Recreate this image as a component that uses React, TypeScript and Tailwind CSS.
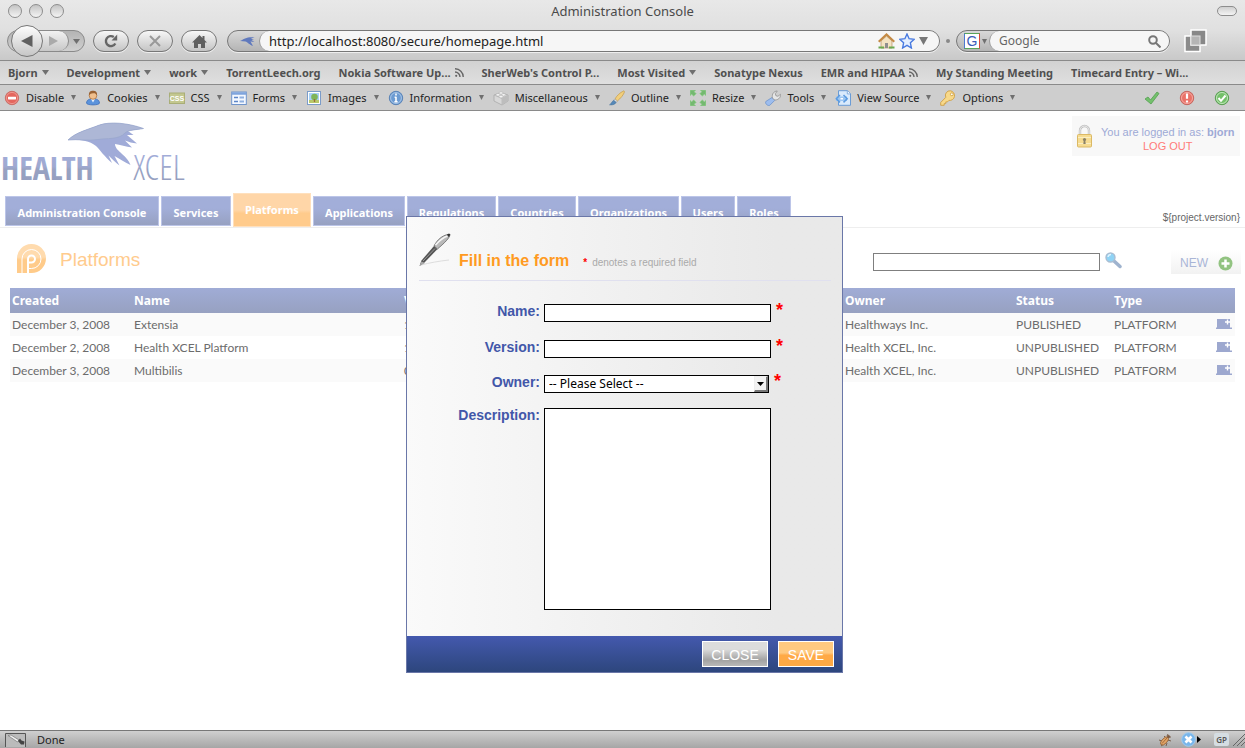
import React from "react";

const ui = "font-['Noto_Sans','DejaVu_Sans',sans-serif]";
const humanist = "font-['Lato','Noto_Sans',sans-serif]";
const arial = "font-['Liberation_Sans',Arial,sans-serif]";

function Caret({ small = false }: { small?: boolean }) {
  return (
    <svg className={small ? "h-[5px] w-[5px] shrink-0" : "h-[5px] w-[7px] shrink-0"} viewBox="0 0 7 5" preserveAspectRatio="none" fill="#6f6f6f">
      <path d="M0 0h7L3.5 5z" />
    </svg>
  );
}

function Rss() {
  return (
    <svg className="size-[9px] shrink-0" viewBox="0 0 9 9" fill="none" stroke="#666" strokeWidth="1.4">
      <path d="M0 .8A8 8 0 0 1 8.2 9M0 4A5 5 0 0 1 5 9" />
      <circle cx="1.2" cy="7.8" r="1.1" fill="#666" stroke="none" />
    </svg>
  );
}

function Icon({ name }: { name: string }) {
  const body: Record<string, React.ReactNode> = {
    disable: (
      <>
        <circle cx="8" cy="8" r="6.7" fill="#e4665e" stroke="#c9706a" />
        <circle cx="8" cy="8" r="5.6" fill="none" stroke="#f0a29b" strokeWidth=".8" />
        <rect x="4" y="6.7" width="8" height="2.8" rx=".4" fill="#fff" />
      </>
    ),
    cookies: (
      <>
        <path d="M1.5 13C2 9.500 4 9 8 9s6 .5 6.500 4c0 2.500-13 2.500-13 0z" fill="#5b93dc" stroke="#3c6fba" strokeWidth=".8" />
        <path d="M6 9l2 3.500L10 9z" fill="#e8f0fb" />
        <circle cx="8" cy="5.500" r="3.800" fill="#f0bf8d" stroke="#a9672c" strokeWidth=".7" />
        <path d="M4 5.500C3.500 2 5.500.8 8 .8S12.500 2 12 5.500c-1-2-2-2.500-4-2.300C6 3.200 5 4 4 5.500z" fill="#9a6233" />
      </>
    ),
    css: (
      <>
        <rect x=".5" y="3" width="15" height="10.500" fill="#c3c78f" stroke="#a9ae77" />
        <text x="8" y="10.800" textAnchor="middle" fontSize="7" fontWeight="700" fill="#fff" fontFamily="Liberation Sans, sans-serif">CSS</text>
      </>
    ),
    forms: (
      <>
        <rect x=".7" y="2" width="14.600" height="12.500" fill="#f4f8ff" stroke="#6f94cb" />
        <path d="M1 3.500h14" stroke="#7fa4dc" strokeWidth="2.500" />
        <path d="M3 7.500h4M3 11.500h4" stroke="#5d86c8" strokeWidth="1.500" />
        <path d="M8.500 7.500H13M8.500 11.500H13" stroke="#8fb0df" strokeWidth="2" />
      </>
    ),
    images: (
      <>
        <rect x="1.500" y="1.500" width="13" height="13" fill="#fff" stroke="#7b9cc9" />
        <path d="M3 3h10v10H3z" fill="#a8d1f5" />
        <path d="M3 10h10v3H3z" fill="#b9c86a" />
        <circle cx="8.500" cy="7" r="3.300" fill="#7fb558" />
        <path d="M8.500 9v3" stroke="#9a6a3b" strokeWidth="1.300" />
      </>
    ),
    information: (
      <>
        <circle cx="8" cy="8" r="6.700" fill="#6c9bd2" stroke="#5a83b6" />
        <circle cx="8" cy="8" r="5.400" fill="none" stroke="#b9d1ec" strokeWidth=".8" />
        <path d="M8 3.600v1.900M8 6.800V12M6.600 7.200H8M6.400 11.700h3.200" stroke="#fff" strokeWidth="1.600" />
      </>
    ),
    misc: (
      <>
        <path d="M8 2.500l7 2.500v6l-6 4L1 11V5z" fill="#d8d8d8" stroke="#aaa" strokeWidth=".8" />
        <path d="M1 5l8 3.500L15 5M9 8.500V15" fill="none" stroke="#b5b5b5" strokeWidth=".8" />
        <path d="M9 8.500V15l6-4V5z" fill="#bdbdbd" />
        <ellipse cx="5" cy="4.800" rx="2" ry="1.300" fill="#f3f3f3" stroke="#aaa" strokeWidth=".5" />
        <ellipse cx="10.500" cy="4.800" rx="2" ry="1.300" fill="#f3f3f3" stroke="#aaa" strokeWidth=".5" />
        <ellipse cx="8" cy="3" rx="2" ry="1.200" fill="#f3f3f3" stroke="#aaa" strokeWidth=".5" />
        <ellipse cx="8" cy="6.600" rx="2" ry="1.300" fill="#f3f3f3" stroke="#aaa" strokeWidth=".5" />
      </>
    ),
    outline: (
      <>
        <path d="M15 .8C11 2.500 7.500 6 6 9l2.300 2C11.500 8.500 14.500 5 15.700 1.500z" fill="#f2cf7c" stroke="#c09a4c" strokeWidth=".7" />
        <path d="M6 9l2.300 2-1.200 1.500L4.700 10.500z" fill="#ddd" stroke="#999" strokeWidth=".5" />
        <path d="M4.700 10.300l2.500 2.200C5.500 15 3 15 .5 14.800c1.800-.8 2-3 4.200-4.500z" fill="#5688b8" stroke="#3d6c99" strokeWidth=".5" />
      </>
    ),
    resize: (
      <path
        d="M0 0h6L4.300 1.700l2 2-2.600 2.600-2-2L0 6zM16 0v6l-1.700-1.700-2 2-2.600-2.600 2-2L10 0zM0 16v-6l1.700 1.700 2-2 2.600 2.600-2 2L6 16zM16 16h-6l1.700-1.700-2-2 2.600-2.600 2 2L16 10z"
        fill="#74b970"
        stroke="#9ed39a"
        strokeWidth=".7"
      />
    ),
    tools: (
      <>
        <path d="M7 7.500l2.800 2.800-5 5c-2 1-5-1.600-4-3.800z" fill="#9dbdee" stroke="#6f94cc" strokeWidth=".8" />
        <path d="M7.500 8C6.500 4 9 1 12.300 1l-2 2.700.6 2 2 .6 2.600-2C16 8 12.500 10.500 9.300 9.800z" fill="#e6e6e6" stroke="#909090" strokeWidth=".8" />
      </>
    ),
    source: (
      <>
        <path d="M3.500.7h9l3 3v11.600h-12z" fill="#d9eafc" stroke="#6a9cd6" />
        <path d="M12.300.7v3.200h3" fill="#fff" stroke="#6a9cd6" strokeWidth=".8" />
        <rect x="1" y="6.500" width="11" height="4.500" fill="#9cc6f2" />
        <path d="M5 5L1.300 8.700 5 12.400M8.500 5l3.700 3.700-3.700 3.700" fill="none" stroke="#5c9be0" strokeWidth="1.500" />
        <path d="M5.500 8.700h2.500" stroke="#fff" strokeWidth="1.500" />
      </>
    ),
    options: (
      <>
        <path d="M10.500.8a4.600 4.600 0 0 0-4.700 6.500L.7 12.500v2.800h3.500v-1.700h1.600v-1.700h1.700l1.400-1.500a4.700 4.700 0 1 0 1.600-9.600z" fill="#f8d98a" stroke="#cf9f45" strokeWidth=".9" />
        <circle cx="11.800" cy="4.300" r="1.400" fill="#fff" stroke="#c58f25" strokeWidth=".7" />
      </>
    ),
  };
  return (
    <svg className="size-4 shrink-0" viewBox="0 0 16 16" aria-hidden="true">
      {body[name]}
    </svg>
  );
}

function BirdMark() {
  return (
    <svg className="h-[9px] w-[15px]" viewBox="0 0 15 9" fill="#6079bd">
      <path d="M0 4C4 2 7-.5 14.500 .3L11 1.700 14 3 11.500 3.300 14.500 5 10.500 4.600 13 9C9 7.500 7.500 5 5.500 4.500z" />
    </svg>
  );
}

const bookmarks: { label: string; mark?: "menu" | "feed" }[] = [
  { label: "Bjorn", mark: "menu" },
  { label: "Development", mark: "menu" },
  { label: "work", mark: "menu" },
  { label: "TorrentLeech.org" },
  { label: "Nokia Software Up...", mark: "feed" },
  { label: "SherWeb's Control P..." },
  { label: "Most Visited", mark: "menu" },
  { label: "Sonatype Nexus" },
  { label: "EMR and HIPAA", mark: "feed" },
  { label: "My Standing Meeting" },
  { label: "Timecard Entry – Wi..." },
];

const tools = [
  { icon: "disable", label: "Disable" },
  { icon: "cookies", label: "Cookies" },
  { icon: "css", label: "CSS" },
  { icon: "forms", label: "Forms" },
  { icon: "images", label: "Images" },
  { icon: "information", label: "Information" },
  { icon: "misc", label: "Miscellaneous" },
  { icon: "outline", label: "Outline" },
  { icon: "resize", label: "Resize" },
  { icon: "tools", label: "Tools" },
  { icon: "source", label: "View Source" },
  { icon: "options", label: "Options" },
];

const pill = "flex h-[22px] w-9 shrink-0 items-center justify-center rounded-full border border-[#777] bg-linear-to-b from-[#f7f7f7] to-[#c4c4c4] shadow-[0_1px_0_#eee]";

function BrowserChrome() {
  return (
    <header className={ui}>
      <div className="bg-linear-to-b from-[#e8e8e8] via-[#e0e0e0] to-[#c8c8c8]">
        <div className="flex h-[22px] items-center px-2">
          <div className="flex w-[60px] gap-[7px]">
            {[0, 1, 2].map((n) => (
              <button key={n} aria-label={["Close window", "Minimise", "Zoom"][n]} className="size-[14px] rounded-full border border-[#8d8d8d] bg-linear-to-b from-[#c4c4c4] to-[#f4f4f4]" />
            ))}
          </div>
          <h1 className="flex-1 text-center text-[13px] leading-[22px] text-[#4a4a4a]">Administration Console</h1>
          <div className="flex w-[60px] justify-end">
            <button aria-label="Toggle toolbar" className="h-[10px] w-5 rounded-full border border-[#8d8d8d] bg-linear-to-b from-[#d0d0d0] to-[#f4f4f4]" />
          </div>
        </div>
        <div className="flex h-[39px] items-center border-b border-[#8a8a8a] pr-[38px] pl-[7px]">
          <div className="mr-2 flex h-[22px] w-[78px] shrink-0 items-center rounded-full border border-[#8a8a8a] bg-linear-to-b from-[#b4b4b4] to-[#d0d0d0]">
            <button aria-label="Back" className="z-10 ml-[3px] flex size-8 shrink-0 items-center justify-center rounded-full border border-[#777] bg-linear-to-b from-[#fdfdfd] to-[#c6c6c6]">
              <svg className="h-[12px] w-[12px]" viewBox="0 0 12 12" fill="#606060"><path d="M11.500 0v12L0 6z" /></svg>
            </button>
            <button aria-label="Forward" className="-ml-1 flex h-5 w-[30px] shrink-0 items-center justify-center rounded-r-full border-r border-[#8a8a8a] bg-linear-to-b from-[#f2f2f2] to-[#c8c8c8]">
              <svg className="h-[10px] w-[9px]" viewBox="0 0 9 10" fill="#aaa"><path d="M0 0v10l9-5z" /></svg>
            </button>
            <button aria-label="History" className="flex flex-1 items-center justify-center"><Caret /></button>
          </div>
          <div className="mr-[10px] flex shrink-0 gap-2">
            <button aria-label="Reload" className={pill}>
              <svg className="size-[14px]" viewBox="0 0 14 14" fill="none" stroke="#666" strokeWidth="2.400">
                <path d="M11.300 9.500A5 5 0 1 1 9.800 3" /><path d="M13.200.5v6H7.500z" fill="#666" stroke="none" />
              </svg>
            </button>
            <button aria-label="Stop" className={pill}>
              <svg className="size-[12px]" viewBox="0 0 12 12" stroke="#999" strokeWidth="2"><path d="M1 1l10 10M11 1L1 11" /></svg>
            </button>
            <button aria-label="Home" className={pill}>
              <svg className="h-[13px] w-[15px]" viewBox="0 0 15 13" fill="#606060"><path d="M7.500 0l3 3V1h2v4L15 7.500h-2V13H9V9H6v4H2V7.500H0z" /></svg>
            </button>
          </div>
          <div className="flex h-[22px] flex-1 items-center overflow-hidden rounded-full border border-[#777] bg-linear-to-b from-[#d8d8d8] to-[#b4b4b4] shadow-[0_1px_0_#eee]">
            <div className="flex w-[31px] shrink-0 justify-center pl-2"><BirdMark /></div>
            <div className="flex h-full flex-1 items-center gap-1 rounded-l-full border-l border-[#999] bg-[#f6f6f6] pr-[11px] pl-[9px]">
              <input aria-label="Address" defaultValue="http://localhost:8080/secure/homepage.html" className="w-full min-w-0 bg-transparent text-[13px] leading-5 text-[#222] outline-none" />
              <svg className="h-4 w-[17px] shrink-0" viewBox="0 0 17 16">
                <path d="M3 8v7h11V8L8.500 3z" fill="#f3e3c4" stroke="#a98250" strokeWidth=".6" />
                <path d="M.7 8.800L8.500 1.500l7.800 7.300" fill="none" stroke="#c48a45" strokeWidth="2.200" />
                <path d="M7 10h3v5H7z" fill="#8f8f8f" /><path d="M.5 14.500h5.500M11 14.500h5.500" stroke="#6aa84f" strokeWidth="2" />
              </svg>
              <svg className="size-4 shrink-0" viewBox="0 0 16 16"><path d="M8 1l2.100 4.700 5.100.6-3.800 3.500 1 5.200L8 12.400 3.600 15l1-5.200L.8 6.300l5.100-.6z" fill="#e4efff" stroke="#4a7be0" strokeWidth="1.400" /></svg>
              <svg className="h-[8px] w-[9px] shrink-0" viewBox="0 0 9 8" fill="#777"><path d="M0 0h9L4.500 8z" /></svg>
            </div>
          </div>
          <div className="mx-[6px] size-1 shrink-0 rounded-full bg-[#888]" />
          <div className="flex h-[22px] w-[214px] shrink-0 items-center overflow-hidden rounded-full border border-[#777] bg-linear-to-b from-[#d8d8d8] to-[#b4b4b4] shadow-[0_1px_0_#eee]">
            <div className="flex w-8 shrink-0 items-center gap-[2px] pl-[7px]">
              <svg className="size-4 shrink-0" viewBox="0 0 16 16">
                <rect x=".5" y=".5" width="15" height="15" fill="#fff" stroke="#5aa55a" />
                <path d="M15.500.5v15" stroke="#d84b3e" /><path d="M.5 15.500V.5" stroke="#4d78d0" />
                <text x="8" y="13" textAnchor="middle" fontSize="14" fill="#3b5cb8" fontFamily="Liberation Sans, sans-serif">G</text>
              </svg>
              <Caret small />
            </div>
            <div className="flex h-full flex-1 items-center rounded-l-full border-l border-[#999] bg-[#f6f6f6] pr-2 pl-[9px]">
              <input aria-label="Search the web" placeholder="Google" className="w-full min-w-0 bg-transparent text-[12px] leading-5 outline-none placeholder:text-[#666]" />
              <svg className="size-[13px] shrink-0" viewBox="0 0 13 13" fill="none" stroke="#777" strokeWidth="2"><circle cx="5" cy="5" r="3.800" /><path d="M8 8l4.500 4.500" /></svg>
            </div>
          </div>
          <svg className="ml-[14px] h-6 w-[23px] shrink-0" viewBox="0 0 23 24">
            <rect x="1" y="7" width="15" height="15.500" fill="#8b8b8b" stroke="#fff" strokeWidth="1.500" />
            <rect x="7" y="1" width="15" height="15" fill="#888" stroke="#fff" strokeWidth="1.500" />
            <rect x="7" y="7" width="9" height="9" fill="#b5b5b5" stroke="#ddd" />
          </svg>
        </div>
      </div>
      <nav className="flex h-6 items-center gap-[18px] overflow-hidden border-b border-[#8a8a8a] bg-linear-to-b from-[#d2d2d2] to-[#dfdfdf] px-2 text-[11px] leading-4 font-bold whitespace-nowrap text-[#505050]">
        {bookmarks.map((b) => (
          <a key={b.label} href="#" className="flex items-center gap-1">
            {b.label}
            {b.mark === "menu" && <Caret />}
            {b.mark === "feed" && <Rss />}
          </a>
        ))}
      </nav>
      <div className="flex h-[26px] items-center border-b border-[#8a8a8a] bg-[#cecece] pr-[15px] pl-1 text-[11px] leading-4 whitespace-nowrap text-[#222]">
        <div className="flex items-center gap-[9px]">
          {tools.map((t) => (
            <button key={t.label} className="flex items-center gap-[7px]">
              <span className="flex items-center gap-[6px]">
                <Icon name={t.icon} />
                {t.label}
              </span>
              <Caret small />
            </button>
          ))}
        </div>
        <div className="ml-auto flex items-center gap-[19px]">
          <svg className="size-4" viewBox="0 0 16 16"><path d="M1 9l3-2 2.500 3L13 2l2 1.500-8 10.500z" fill="#74c06d" stroke="#539f4f" strokeWidth=".8" /></svg>
          <svg className="size-4" viewBox="0 0 16 16"><circle cx="8" cy="8" r="6.700" fill="#ea7268" stroke="#c5675f" /><circle cx="8" cy="8" r="5.500" fill="none" stroke="#f5aaa3" /><path d="M8 3.500v5.300M8 10.500v2" stroke="#fff" strokeWidth="2.200" /></svg>
          <svg className="size-4" viewBox="0 0 16 16"><circle cx="8" cy="8" r="6.700" fill="#74c06a" stroke="#5a9d53" /><circle cx="8" cy="8" r="5.500" fill="none" stroke="#c2e6bd" /><path d="M4.500 8l2.500 2.800L11.500 5.500" fill="none" stroke="#fff" strokeWidth="2" /></svg>
        </div>
      </div>
    </header>
  );
}

function Logo() {
  const bold = "'Open Sans Condensed','Roboto Condensed','Liberation Sans Narrow','Open Sans',sans-serif";
  const light = "'Open Sans Condensed Light','Open Sans Light Condensed','Noto Sans ExtraCondensed Light','Noto Sans Condensed Light','Roboto Condensed Light','Liberation Sans Narrow',sans-serif";
  return (
    <svg className="block h-[85px] w-[200px]" viewBox="0 111 200 85" aria-label="Health Xcel">
      <defs>
        <linearGradient id="brand" gradientUnits="userSpaceOnUse" x1="0" y1="155" x2="0" y2="181">
          <stop offset="0" stopColor="#a1acd8" />
          <stop offset=".45" stopColor="#9fa9d0" />
          <stop offset=".55" stopColor="#98a2c2" />
          <stop offset="1" stopColor="#959fc0" />
        </linearGradient>
      </defs>
      <path d="M68 140C76 132 90 129 98 125.500C110 121 128 123 143.500 128.500L128 131L133.500 135L127 135L137 143.500C132 143 129 142 125 140.500L132 147.500C126 146.500 120 145 115 144C115 148 119 151 122 154C126 157 129 161 130.500 165C124 162 120 159 114.500 156L119.500 165.500C115 162 112 159 108.500 155.500L112 163C104 156 100 150 96 146C88 140 78 139.500 68 140Z" fill="#a0abd8" />
      <path d="M68 140C76 132 90 129 98 125.500C110 121 128 123 143.500 128.500C136 130 129 129.500 125 133C119 140 106 138 98 139.500C88 141 78 139 68 140Z" fill="#adb7d6" stroke="#98a6cc" strokeWidth=".7" />
      <text x="1" y="180" fontFamily={bold} fontSize="32" fontWeight="700" fill="url(#brand)">HEALTH</text>
      <text x="133" y="180" fontFamily={light} fontSize="35" fontWeight="300" fill="url(#brand)">XCEL</text>
    </svg>
  );
}

const tabs = [
  { label: "Administration Console", w: "w-[154px]" },
  { label: "Services", w: "w-[70px]" },
  { label: "Platforms", w: "w-[78px]", active: true },
  { label: "Applications", w: "w-[92px]" },
  { label: "Regulations", w: "w-[89px]" },
  { label: "Countries", w: "w-[78px]" },
  { label: "Organizations", w: "w-[101px]" },
  { label: "Users", w: "w-[54px]" },
  { label: "Roles", w: "w-[54px]" },
];

const rows = [
  { created: "December 3, 2008", name: "Extensia", version: "1.0", owner: "Healthways Inc.", status: "PUBLISHED" },
  { created: "December 2, 2008", name: "Health XCEL Platform", version: "1.0", owner: "Health XCEL, Inc.", status: "UNPUBLISHED" },
  { created: "December 3, 2008", name: "Multibilis", version: "0.1", owner: "Health XCEL, Inc.", status: "UNPUBLISHED" },
];

function PlatformsPage() {
  return (
    <>
      <div className="flex h-[82px] items-start justify-between">
        <a href="#"><Logo /></a>
        <div className={`${arial} mt-[5px] mr-[5px] flex h-10 w-[168px] items-center gap-2 bg-[#f8f8f8] pl-1 text-[11px] leading-[14px] text-[#9eaad6]`}>
          <svg className="h-6 w-[17px] shrink-0" viewBox="0 0 17 24">
            <path d="M4 11V6.500a4.500 4.500 0 0 1 9 0V11" fill="none" stroke="#c0c0c0" strokeWidth="2.400" />
            <path d="M4 11V6.500a4.500 4.500 0 0 1 9 0V11" fill="none" stroke="#ececec" strokeWidth="1" />
            <rect x="1.500" y="10.500" width="14" height="12.500" rx="1" fill="#f6dc92" stroke="#dbb965" />
            <path d="M2 13.500h13M2 19.500h13" stroke="#fbeec2" />
            <circle cx="8.500" cy="15.500" r="1.600" fill="#8a8268" /><path d="M7.800 16h1.400l.5 4H7.300z" fill="#8a8268" />
          </svg>
          <div className="pt-[5px] text-center whitespace-nowrap">
            <p>You are logged in as: <b>bjorn</b></p>
            <a href="#" className="block text-[#ff7b78]">LOG OUT</a>
          </div>
        </div>
      </div>

      <div className="flex h-[35px] items-end justify-between border-b border-[#eee] pr-[5px] pl-[5px]">
        <nav className={`${ui} flex items-end gap-[2px] text-[11px] leading-4 font-bold whitespace-nowrap text-white`}>
          {tabs.map((t) => (
            <a
              key={t.label}
              href="#"
              className={`${t.w} flex justify-center ${
                t.active
                  ? "h-[34px] border border-[#ffe0bd] bg-linear-to-b from-[#ffd6a8] from-50% to-[#ffcb8c] to-60% pt-2"
                  : "mb-px h-[30px] border border-[#bcc5e8] bg-linear-to-b from-[#a2aed9] from-40% to-[#97a1c1] pt-2"
              }`}
            >
              {t.label}
            </a>
          ))}
        </nav>
        <span className={`${arial} mb-[3px] text-[10px] leading-3 text-[#666]`}>{"${project.version}"}</span>
      </div>

      <div className="flex h-[60px] items-center pt-[2px] pr-1 pl-4">
        <svg className="size-[30px]" viewBox="0 0 30 30">
          <defs>
            <linearGradient id="p" x1="0" y1="0" x2="0" y2="1"><stop offset=".45" stopColor="#ffdbae" /><stop offset=".55" stopColor="#ffcb8a" /></linearGradient>
          </defs>
          <path d="M1 29V15A14.500 14.500 0 1 1 15.500 29z" fill="url(#p)" />
          <path d="M6 29V15a9.500 9.500 0 1 1 9.500 9.500H12" fill="none" stroke="#fff" strokeWidth="1" />
          <path d="M12 29V15a3.500 3.500 0 1 1 3.500 3.500H12" fill="none" stroke="#fff" strokeWidth="2" />
        </svg>
        <h2 className={`${arial} ml-[14px] pt-[2px] text-[19px] leading-6 text-[#ffcb8d]`}>Platforms</h2>
        <div className="ml-auto flex items-center gap-[5px] pt-[6px]">
          <input aria-label="Search platforms" className="h-[18px] w-[227px] border border-[#7f7f7f] bg-white px-1 text-[11px]" />
          <button aria-label="Search" className="mb-1">
            <svg className="block size-[17px]" viewBox="0 0 17 17">
              <path d="M9 9l6 5.500" stroke="#9fb3ce" strokeWidth="3.500" strokeLinecap="round" />
              <circle cx="5.500" cy="5.500" r="4.500" fill="#8fd3f5" stroke="#a9bdd2" strokeWidth="1.400" />
              <path d="M3 5a3 3 0 0 1 3-2.500" stroke="#dff4ff" strokeWidth="1.500" fill="none" />
            </svg>
          </button>
          <button className={`${arial} ml-[44px] flex h-6 w-[70px] items-center justify-between bg-linear-to-b from-white to-[#f2f2f2] pt-[2px] pr-2 pl-[9px] text-[12px] text-[#a9b5d6]`}>
            NEW
            <svg className="size-[15px]" viewBox="0 0 15 15"><circle cx="7.500" cy="7.500" r="7" fill="#92c381" /><path d="M7.500 3.500v8M3.500 7.500h8" stroke="#fff" strokeWidth="2.500" /></svg>
          </button>
        </div>
      </div>

      <div className="px-[10px]">
        <table className={`${humanist} w-full table-fixed border-collapse text-left text-[12px] leading-4 text-[#6c6c6c]`}>
          <thead className={ui}>
            <tr className="h-[25px] bg-linear-to-b from-[#a0acd6] to-[#97a1c1] text-white">
              <th className="w-[122px] px-[2px] py-0">Created</th>
              <th className="w-[270px] px-[2px] py-0">Name</th>
              <th className="px-[2px] py-0">Version</th>
              <th className="w-[171px] px-[2px] py-0">Owner</th>
              <th className="w-[98px] px-[2px] py-0">Status</th>
              <th className="w-[102px] px-[2px] py-0">Type</th>
              <th className="w-[21px] py-0" aria-label="Actions" />
            </tr>
          </thead>
          <tbody>
            {rows.map((r) => (
              <tr key={r.name} className="h-[23px] odd:bg-[#fafafa]">
                <td className="px-[2px] py-0">{r.created}</td>
                <td className="px-[2px] py-0">{r.name}</td>
                <td className="px-[2px] py-0">{r.version}</td>
                <td className="px-[2px] py-0">{r.owner}</td>
                <td className="px-[2px] py-0">{r.status}</td>
                <td className="px-[2px] py-0">PLATFORM</td>
                <td className="px-[2px] py-0">
                  <button aria-label="Add" className="block pb-[2px]">
                    <svg className="block h-[10px] w-4" viewBox="0 0 16 10">
                      <path d="M1 0h13v8.500h2V10H0V8.500h1z" fill="#9da8cf" /><path d="M11.500.5v5M9 3h5" stroke="#fff" strokeWidth="1.400" />
                    </svg>
                  </button>
                </td>
              </tr>
            ))}
          </tbody>
        </table>
      </div>
    </>
  );
}

const field = "w-[227px] shrink-0 border border-black bg-white px-1 text-[11px]";
const label = "w-[121px] shrink-0 text-right text-[14px] leading-[14px] font-bold text-[#4257a9]";

function Required() {
  return <span className="ml-px h-4 text-[18px] leading-[12px] font-bold text-[#f00]">*</span>;
}

function FormDialog() {
  return (
    <form role="dialog" aria-label="Fill in the form" onSubmit={(e) => e.preventDefault()} className={`${arial} flex w-[437px] flex-col border border-[#6a77a8] bg-[#eee]`}>
      <div className="bg-linear-to-r from-[#fafafa] to-[#e9e9e9] to-85% px-3 pt-4 pb-[26px]">
        <div className="mr-[-1px] flex items-end border-b border-[#e0e0ef] pb-[9px]">
          <svg className="mb-1 h-[34px] w-8" viewBox="0 0 32 34">
            <path d="M2 32C10 30 20 28 30 27" stroke="#ddd" strokeWidth="1" fill="none" />
            <path d="M2.500 27.500L15 13l3.500 3L5.500 29.500.5 33z" fill="#555" />
            <path d="M15 13C18 7 23 2.500 29 1.500l2 1C29 7 23 12 18.500 16z" fill="#b9b9b9" stroke="#555" strokeWidth=".7" />
            <path d="M16.500 12C20 8 24 4.500 28.500 3" stroke="#f6f6f6" strokeWidth="1.600" fill="none" />
            <path d="M4 28l12-12.500" stroke="#9a9a9a" strokeWidth="1" />
            <path d="M28 1.500l2-1 1.500 1-2 2.500z" fill="#333" /><path d="M.5 33l2-4.500L6 30z" fill="#aaa" />
          </svg>
          <h2 className="ml-2 text-[16px] leading-5 font-bold text-[#ff9a21]">Fill in the form</h2>
          <span className="ml-[14px] text-[10px] leading-4 font-bold text-[#f00]">*</span>
          <span className="ml-[5px] text-[10px] leading-4 text-[#aaa]">denotes a required field</span>
        </div>
        <div className="mt-[23px] mb-[18px] flex gap-1">
          <label htmlFor="name" className={label}>Name:</label>
          <input id="name" className={`${field} h-[18px]`} />
          <Required />
        </div>
        <div className="mb-[17px] flex gap-1">
          <label htmlFor="version" className={label}>Version:</label>
          <input id="version" className={`${field} h-[18px]`} />
          <Required />
        </div>
        <div className="mb-[15px] flex gap-1">
          <label htmlFor="owner" className={label}>Owner:</label>
          <div className="relative">
            <select id="owner" className={`${ui} block h-[18px] w-[225px] appearance-none border border-black bg-white px-1 text-[12px] leading-4 text-black`}>
              <option>-- Please Select --</option>
            </select>
            <span className="pointer-events-none absolute top-px right-px flex h-4 w-[14px] items-center justify-center border-t border-r-2 border-b-2 border-l border-t-[#eee] border-r-[#777] border-b-[#777] border-l-[#eee] bg-[#f2f2f2]">
              <svg className="h-1 w-[7px]" viewBox="0 0 7 4"><path d="M0 0h7L3.500 4z" /></svg>
            </span>
          </div>
          <Required />
        </div>
        <div className="flex gap-1">
          <label htmlFor="description" className={label}>Description:</label>
          <textarea id="description" className={`${field} block h-[202px] resize-none`} />
        </div>
      </div>
      <div className="flex h-9 items-center justify-end gap-[10px] bg-linear-to-b from-[#4459ae] to-[#2d467d] pr-2 text-[14px] text-white">
        <button type="button" className="h-[26px] w-[66px] border border-white bg-linear-to-b from-[#dcdcdc] from-30% via-[#a2a2a2] via-75% to-[#b8b8b8] pt-[2px]">CLOSE</button>
        <button type="submit" className="h-[26px] w-14 border border-white bg-linear-to-b from-[#ffc980] from-45% to-[#ffa945] to-55% pt-[2px]">SAVE</button>
      </div>
    </form>
  );
}

function StatusBar() {
  return (
    <footer className={`${ui} flex h-[18px] shrink-0 items-center border-t border-[#777] bg-linear-to-b from-[#cfcfcf] to-[#a6a6a6] pl-[5px] text-[11px] leading-4 text-[#222]`}>
      <svg className="h-[14px] w-[21px]" viewBox="0 0 21 14">
        <path d="M.5 14V.5h20V14" fill="#bbb" stroke="#555" />
        <path d="M3 2.500l3-.5 8 5-1.500 2z" fill="#eee" stroke="#777" strokeWidth=".7" />
        <path d="M13 8l2-2.500 1.500 2 3 1-.5 3h-3z" fill="#444" />
      </svg>
      <span className="ml-[11px]">Done</span>
      <div className="ml-auto flex items-center">
        <svg className="size-[14px]" viewBox="0 0 14 14">
          <path d="M1 7l3 1M3 13l3-2M8 13l1-3M6 3l2 2M13 8l-3-1M10 1l-1 2M13 4h-3" stroke="#6a4a33" strokeWidth=".8" />
          <ellipse cx="6.500" cy="8" rx="2.500" ry="5" transform="rotate(42 6.500 8)" fill="#e0a468" stroke="#8a5526" strokeWidth=".7" />
          <path d="M4 10.500l5-5.500" stroke="#8a5526" strokeWidth=".7" />
          <circle cx="10.500" cy="3.500" r="1.500" fill="#7e5a40" />
        </svg>
        <svg className="ml-[9px] size-[15px]" viewBox="0 0 15 15"><circle cx="7.500" cy="7.500" r="6.800" fill="#79b6ea" stroke="#9ccaf0" /><path d="M4.500 4.500l6 6M10.500 4.500l-6 6" stroke="#fff" strokeWidth="2.600" /></svg>
        <svg className="ml-px h-[7px] w-1" viewBox="0 0 4 7"><path d="M0 0v7l4-3.500z" /></svg>
        <span className="ml-[13px] rounded-[2px] bg-[#d5dde2] px-[2px] text-[8px] leading-[13px] font-semibold text-[#555]">GP</span>
        <svg className="ml-1 size-[12px]" viewBox="0 0 12 12" stroke="#666"><path d="M0 12L12 0M4 12l8-8M8 12l4-4" /></svg>
      </div>
    </footer>
  );
}

export default function App() {
  return (
    <div className="flex min-h-screen flex-col bg-white">
      <BrowserChrome />
      <main className="relative flex-1">
        <PlatformsPage />
        <div className="absolute inset-x-0 top-[105px] flex justify-center pl-1">
          <FormDialog />
        </div>
      </main>
      <StatusBar />
    </div>
  );
}
